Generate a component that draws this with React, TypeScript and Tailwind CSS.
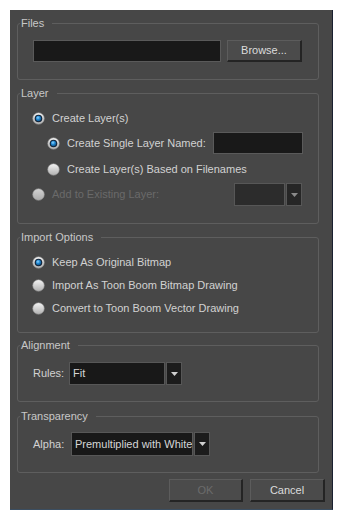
import React from "react";

const font = { fontFamily: '"Liberation Sans", Arial, sans-serif' };

function Radio({ checked = false, disabled = false }: { checked?: boolean; disabled?: boolean }) {
  const id = React.useId().replace(/:/g, "");
  return (
    <svg width="13" height="13" viewBox="0 0 13 13" className="shrink-0">
      <defs>
        <linearGradient id={`g${id}`} x1="0" y1="0" x2="0" y2="1">
          <stop offset="0" stopColor={disabled ? "#d4d4d4" : "#f4f4f4"} />
          <stop offset="1" stopColor={disabled ? "#ababab" : "#b0b0b0"} />
        </linearGradient>
        <radialGradient id={`b${id}`} cx="0.4" cy="0.35" r="0.7">
          <stop offset="0" stopColor="#8fd4ff" />
          <stop offset="0.5" stopColor="#1f86d0" />
          <stop offset="1" stopColor="#0d4d80" />
        </radialGradient>
      </defs>
      <circle cx="6.5" cy="6.5" r="5.8" fill={`url(#g${id})`} stroke={disabled ? "#959595" : "#8c8c8c"} strokeWidth="0.6" />
      {checked && (
        <>
          <circle cx="6.5" cy="6.5" r="3.8" fill="#13253a" />
          <circle cx="6.5" cy="6.5" r="2.7" fill={`url(#b${id})`} />
        </>
      )}
    </svg>
  );
}

function Group({ title, className, children }: { title: string; className: string; children?: React.ReactNode }) {
  return (
    <div className={`relative rounded-[3px] border border-[#5e5e5e] ${className}`}>
      <span className="absolute -top-[8px] left-[2px] whitespace-nowrap bg-[#474747] pl-[1px] pr-[8px] text-[11px] leading-[14px] text-[#c8c8c8]">
        {title}
      </span>
      {children}
    </div>
  );
}

function Combo({ value, w, disabled = false }: { value: string; w: string; disabled?: boolean }) {
  return (
    <div className="flex h-full shrink-0 items-stretch gap-[1px]">
      <div
        className={`flex items-center overflow-hidden whitespace-nowrap border border-[#575757] pl-[3px] text-[11px] ${w} ${
          disabled ? "bg-[#2c2c2c]" : "bg-[#181818] text-[#d6d6d6]"
        }`}
      >
        {value}
      </div>
      <div
        className={`flex w-[16px] items-center justify-center border border-[#575757] ${
          disabled ? "bg-[#262626]" : "bg-[#1c1c1c]"
        }`}
      >
        <svg width="7" height="4" viewBox="0 0 7 4">
          <path d="M0 0h7L3.5 4z" fill={disabled ? "#8a8a8a" : "#d0d0d0"} />
        </svg>
      </div>
    </div>
  );
}

function Button({ label, disabled = false, w }: { label: string; disabled?: boolean; w: string }) {
  return (
    <div
      className={`flex h-full shrink-0 items-center justify-center whitespace-nowrap border-t border-l border-t-[#5c5c5c] border-l-[#5c5c5c] border-b-2 border-r-2 border-b-[#242424] border-r-[#242424] bg-[#4b4b4b] text-[11px] ${w} ${
        disabled ? "text-[#6c6c6c]" : "text-[#dcdcdc]"
      }`}
    >
      {label}
    </div>
  );
}

export default function App() {
  return (
    <div className="h-[520px] w-[343px] bg-white pl-[10px] pt-[10px]" style={font}>
      <div className="flex h-[500px] w-[323px] flex-col whitespace-nowrap border-b border-r border-b-[#3b4e61] border-r-[#1a2030] bg-[#474747] pl-[7px] pr-[13px] pt-[13px] text-[#d2d2d2]">
        {/* Files */}
        <Group title="Files" className="h-[57px] shrink-0">
          <div className="ml-[15px] mr-[16px] mt-[16px] flex h-[22px] gap-[6px]">
            <div className="w-[188px] shrink-0 border border-[#5a5a5a] bg-[#191919]" />
            <Button label="Browse..." w="w-[75px]" />
          </div>
        </Group>

        {/* Layer */}
        <Group title="Layer" className="mt-[13px] h-[131px] shrink-0">
          <div className="flex flex-col pl-[14px] pr-[16px] pt-[13px] text-[11px]">
            <div className="flex h-[22px] items-center gap-[7px]">
              <Radio checked />
              <span>Create Layer(s)</span>
            </div>
            <div className="mt-[3px] flex h-[22px] items-center gap-[7px] pl-[15px]">
              <Radio checked />
              <span>Create Single Layer Named:</span>
              <div className="ml-auto h-full w-[90px] shrink-0 border border-[#5a5a5a] bg-[#191919]" />
            </div>
            <div className="mt-[4px] flex h-[22px] items-center gap-[7px] pl-[15px]">
              <Radio />
              <span>Create Layer(s) Based on Filenames</span>
            </div>
            <div className="mt-[3px] flex h-[23px] items-center gap-[7px]">
              <Radio disabled />
              <span className="text-[#6a6a6a]">Add to Existing Layer:</span>
              <div className="ml-auto h-full">
                <Combo value="" w="w-[51px]" disabled />
              </div>
            </div>
          </div>
        </Group>

        {/* Import Options */}
        <Group title="Import Options" className="mt-[13px] h-[96px] shrink-0">
          <div className="flex flex-col pl-[14px] pt-[13px] text-[11px]">
            <div className="flex h-[23px] items-center gap-[7px]">
              <Radio checked />
              <span>Keep As Original Bitmap</span>
            </div>
            <div className="flex h-[23px] items-center gap-[7px]">
              <Radio />
              <span>Import As Toon Boom Bitmap Drawing</span>
            </div>
            <div className="flex h-[23px] items-center gap-[7px]">
              <Radio />
              <span>Convert to Toon Boom Vector Drawing</span>
            </div>
          </div>
        </Group>

        {/* Alignment */}
        <Group title="Alignment" className="mt-[12px] h-[57px] shrink-0">
          <div className="ml-[15px] mt-[16px] flex h-[23px] items-center gap-[6px] text-[11px]">
            <span className="w-[30px] shrink-0">Rules:</span>
            <Combo value="Fit" w="w-[96px]" />
          </div>
        </Group>

        {/* Transparency */}
        <Group title="Transparency" className="mt-[14px] h-[57px] shrink-0">
          <div className="ml-[15px] mt-[15px] flex h-[24px] items-center gap-[6px] text-[11px]">
            <span className="w-[32px] shrink-0">Alpha:</span>
            <Combo value="Premultiplied with White" w="w-[122px]" />
          </div>
        </Group>

        {/* Buttons */}
        <div className="-mr-[6px] mt-[6px] flex h-[23px] shrink-0 justify-end gap-[7px]">
          <Button label="OK" disabled w="w-[74px]" />
          <Button label="Cancel" w="w-[75px]" />
        </div>
      </div>
    </div>
  );
}
